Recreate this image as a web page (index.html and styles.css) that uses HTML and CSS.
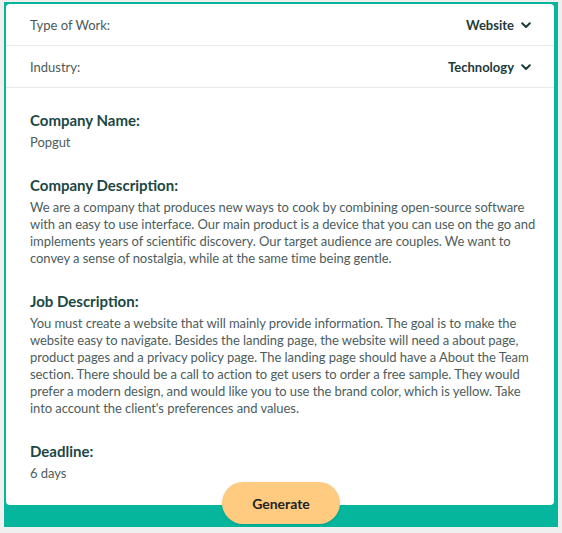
FILE: index.html
```html
<!DOCTYPE html>
<html>
<head>
<meta charset="utf-8">
<link rel="stylesheet" href="styles.css">
</head>
<body>
<div class="frame">
  <div class="card">
    <div class="row">
      <span class="label">Type of Work:</span>
      <span class="select">Website
        <svg class="chev" width="10" height="7" viewBox="0 0 10 7"><path d="M1.2 1.2 L5 5 L8.8 1.2" fill="none" stroke="#1d3b3a" stroke-width="2" stroke-linecap="round" stroke-linejoin="round"/></svg>
      </span>
    </div>
    <div class="row">
      <span class="label">Industry:</span>
      <span class="select">Technology
        <svg class="chev" width="10" height="7" viewBox="0 0 10 7"><path d="M1.2 1.2 L5 5 L8.8 1.2" fill="none" stroke="#1d3b3a" stroke-width="2" stroke-linecap="round" stroke-linejoin="round"/></svg>
      </span>
    </div>
    <div class="content">
      <section class="sec">
        <h3>Company Name:</h3>
        <p>Popgut</p>
      </section>
      <section class="sec">
        <h3>Company Description:</h3>
        <p>We are a company that produces new ways to cook by combining open-source software with an easy to use interface. Our main product is a device that you can use on the go and implements years of scientific discovery. Our target audience are couples. We want to convey a sense of nostalgia, while at the same time being gentle.</p>
      </section>
      <section class="sec">
        <h3>Job Description:</h3>
        <p>You must create a website that will mainly provide information. The goal is to make the website easy to navigate. Besides the landing page, the website will need a about page, product pages and a privacy policy page. The landing page should have a About the Team section. There should be a call to action to get users to order a free sample. They would prefer a modern design, and would like you to use the brand color, which is yellow. Take into account the client's preferences and values.</p>
      </section>
      <section class="sec">
        <h3>Deadline:</h3>
        <p>6 days</p>
      </section>
    </div>
  </div>
  <button class="generate">Generate</button>
</div>
</body>
</html>
```
FILE: styles.css
```css
html, body {
  margin: 0;
  padding: 0;
  background: #efefef;
  font-family: "Lato", "Noto Sans", sans-serif;
}
.frame {
  position: relative;
  margin: 2px 4px 0 4px;
  width: 554px;
  height: 525px;
  box-sizing: border-box;
  padding: 2px 4px 22px 2px;
  background: #05b69d;
}
.card {
  background: #fff;
  border-radius: 4px;
  height: 501px;
  box-sizing: border-box;
  overflow: hidden;
}
.row {
  display: flex;
  justify-content: space-between;
  align-items: center;
  height: 41px;
  padding: 0 23px 0 24px;
  border-bottom: 1px solid #e5eaea;
}
.label {
  font-size: 13px;
  color: #4b5a5a;
}
.select {
  display: flex;
  align-items: center;
  gap: 7px;
  font-size: 13px;
  font-weight: 700;
  color: #1d3b3a;
}
.chev { display: block; margin-top: 1px; }
.content {
  padding: 22px 18px 0 24px;
}
.sec + .sec { margin-top: 24px; }
.sec h3 {
  margin: 0 0 4px 0;
  font-size: 15px;
  line-height: 20px;
  font-weight: 700;
  color: #1c4744;
}
.sec p {
  margin: 0;
  font-size: 13px;
  line-height: 17px;
  letter-spacing: -0.06px;
  color: #4d5d5d;
}
.generate {
  position: absolute;
  left: 50%;
  bottom: 3px;
  transform: translateX(-50%);
  width: 118px;
  height: 42px;
  border: none;
  border-radius: 21px;
  background: #fecb80;
  box-shadow: 0 1px 3px rgba(0,0,0,0.12);
  font-family: "Lato", "Noto Sans", sans-serif;
  font-size: 14px;
  font-weight: 700;
  color: #222;
}
```
